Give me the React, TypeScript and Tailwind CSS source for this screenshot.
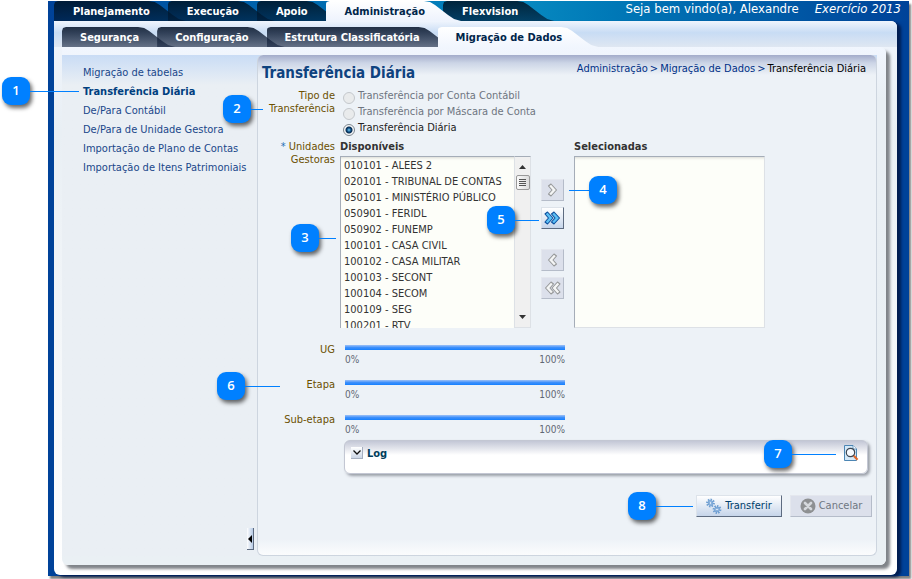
import React, { useState } from "react";

type TabItem = { label: string; active?: boolean; z: string };

const mainTabs: TabItem[] = [
  { label: "Planejamento", z: "z-0" },
  { label: "Execução", z: "z-0" },
  { label: "Apoio", z: "z-0" },
  { label: "Administração", active: true, z: "z-10" },
  { label: "Flexvision", z: "z-0" },
];

const subTabs: TabItem[] = [
  { label: "Segurança", z: "z-0" },
  { label: "Configuração", z: "z-0" },
  { label: "Estrutura Classificatória", z: "z-0" },
  { label: "Migração de Dados", active: true, z: "z-10" },
];

const menu = [
  "Migração de tabelas",
  "Transferência Diária",
  "De/Para Contábil",
  "De/Para de Unidade Gestora",
  "Importação de Plano de Contas",
  "Importação de Itens Patrimoniais",
];

const units = [
  "010101 - ALEES 2",
  "020101 - TRIBUNAL DE CONTAS",
  "050101 - MINISTÉRIO PÚBLICO",
  "050901 - FERIDL",
  "050902 - FUNEMP",
  "100101 - CASA CIVIL",
  "100102 - CASA MILITAR",
  "100103 - SECONT",
  "100104 - SECOM",
  "100109 - SEG",
  "100201 - RTV",
];

const tabClip =
  "[clip-path:polygon(0_4px,1px_1px,4px_0,calc(100%-37px)_0,calc(100%-31px)_1px,calc(100%-26px)_4px,calc(100%-13px)_14px,calc(100%-7px)_18px,100%_20px,0_20px)]";

function Tab({ tab, level }: { tab: TabItem; level: 1 | 2 }) {
  const look = tab.active
    ? level === 1
      ? "bg-linear-to-b from-white to-[#eef3fd] text-[#00254a]"
      : "bg-linear-to-b from-white to-[#f1f6fe] text-[#00254a]"
    : level === 1
      ? "bg-linear-to-b from-[#001425]/85 to-[#001a35]/65 text-white"
      : "bg-linear-to-b from-[#0c1a30]/90 to-[#15233f]/60 text-white";
  const pad = level === 1 ? "pl-[19px] pr-9" : "pl-[18px] pr-9";
  return (
    <button
      type="button"
      role="tab"
      aria-selected={!!tab.active}
      className={`relative -mr-[18px] h-5 whitespace-nowrap text-[11px] leading-[22px] font-bold ${pad} ${tab.z} ${look} ${tabClip}`}
    >
      {tab.label}
    </button>
  );
}

function Callout({ n, place, line, side = "right" }: { n: number; place: string; line: string; side?: "left" | "right" }) {
  return (
    <div className={`pointer-events-none absolute z-20 flex items-center ${side === "left" ? "flex-row-reverse" : ""} ${place}`}>
      <span className="flex size-7 items-center justify-center rounded-[9px] bg-[#0080ff] font-['Open_Sans',sans-serif] text-[13px] font-semibold text-white shadow-[2px_3px_4px_rgba(0,0,0,0.6)]">
        {n}
      </span>
      <span className={`h-px bg-[#0080ff] ${line}`} />
    </div>
  );
}

function Chevrons({ double, left, active }: { double?: boolean; left?: boolean; active?: boolean }) {
  const d = double
    ? ["M1 3 L3.500 1 L9 7 L3.500 13 L1 11 L4.500 7 Z", "M7.500 3 L10 1 L15.500 7 L10 13 L7.500 11 L11 7 Z"]
    : ["M4.500 3 L7 1 L12.500 7 L7 13 L4.500 11 L8 7 Z"];
  return (
    <svg viewBox="0 0 17 14" className={`h-3.5 w-[17px] ${left ? "-scale-x-100" : ""}`} aria-hidden="true">
      {d.map((p) => (
        <path key={p} d={p} fill={active ? "#5cc0f5" : "#f4f5f5"} stroke={active ? "#0c4f9e" : "#969899"} strokeWidth="1.1" strokeLinejoin="round" />
      ))}
    </svg>
  );
}

function MoveButton({ label, double, left, active }: { label: string; double?: boolean; left?: boolean; active?: boolean }) {
  const look = active
    ? "border-t-[#dde3ea] border-l-[#dde3ea] border-r-[#5d6b80] border-b-[#5d6b80] bg-linear-to-b from-white to-[#c6d5ea]"
    : "border-t-[#e4e7ee] border-l-[#e4e7ee] border-r-[#b5bcc9] border-b-[#b5bcc9] bg-[#dce0eb]";
  return (
    <button type="button" aria-label={label} disabled={!active} className={`flex h-[22px] w-[23px] items-center justify-center border ${look}`}>
      <Chevrons double={double} left={left} active={active} />
    </button>
  );
}

function Gear({ cx, cy, r }: { cx: number; cy: number; r: number }) {
  return (
    <g>
      <circle cx={cx} cy={cy} r={r} fill="none" stroke="#6f9fd2" strokeWidth="2" strokeDasharray="1.5 1.1" />
      <circle cx={cx} cy={cy} r={r - 1} fill="#a9cbee" stroke="#5b8fc9" strokeWidth="0.8" />
      <circle cx={cx} cy={cy} r="1.2" fill="#f2f7fc" stroke="#5b8fc9" strokeWidth="0.6" />
    </g>
  );
}

function Progress({ label }: { label: string }) {
  return (
    <div className="flex h-[35px]">
      <span id={`p-${label}`} className="w-[77px] text-right leading-[15px] text-[#6b5000]">
        {label}
      </span>
      <div className="ml-[10px] w-[220px] pt-[3px]">
        <div role="progressbar" aria-labelledby={`p-${label}`} className="h-[5px] bg-linear-to-b from-[#9cc0f5] via-[#3d90fb] to-[#0f80ff]" />
        <div className="mt-1 flex justify-between text-[10px] leading-3 text-[#5f6874]">
          <span>0%</span>
          <span>100%</span>
        </div>
      </div>
    </div>
  );
}

const listBox =
  "block h-[172px] appearance-none overflow-hidden border-t border-l border-[#a5adb8] bg-[#fdfef9] pt-0.5 shadow-[inset_0_3px_3px_-2px_rgba(0,0,0,0.15)] outline-none";

export default function App() {
  const [type, setType] = useState(2);
  const radios = ["Transferência por Conta Contábil", "Transferência por Máscara de Conta", "Transferência Diária"];

  return (
    <div className="relative flex min-h-screen flex-col bg-white pt-px pr-[3px] pb-[3px] pl-12 font-['DejaVu_Sans_Condensed','DejaVu_Sans',sans-serif] text-[11px] text-[#333]">
      <div className="flex grow flex-col bg-[#004299] shadow-[2px_3px_2px_rgba(0,0,0,0.5)]">
        <header className="flex h-5 justify-between bg-linear-to-r from-[#004299] via-[#0889c0] via-55% to-[#004299] pl-1.5">
          <nav role="tablist" aria-label="Módulos" className="flex">
            {mainTabs.map((t) => (
              <Tab key={t.label} tab={t} level={1} />
            ))}
          </nav>
          <div className="flex gap-4 pr-2 text-[13px] leading-4 whitespace-nowrap text-white">
            <span>Seja bem vindo(a), Alexandre</span>
            <em>Exercício 2013</em>
          </div>
        </header>

        <div className="mr-3 mb-px ml-1.5 flex grow flex-col rounded-tr-md rounded-b-md bg-linear-to-b from-[#f0f5fd] via-[#e9eff4] via-20% to-white pr-[11px] pb-2.5 pl-2 shadow-[4px_2px_3px_#001c50]">
          <nav role="tablist" aria-label="Seções" className="-mr-[11px] -ml-2 flex h-[26px] rounded-tr-md bg-linear-to-b from-[#f0f5fd] via-[#c8dcf4] via-45% to-[#dfe7f2] pt-1.5 pl-2">
            {subTabs.map((t) => (
              <Tab key={t.label} tab={t} level={2} />
            ))}
          </nav>

          <div className="flex grow flex-col rounded-tr-md rounded-b-md bg-linear-to-b from-[#f1f6fe] via-[#e9eff4] via-10% to-[#eaf0f4] pt-2 pr-[9px] pb-[9px] shadow-[4px_4px_3px_#808489]">
            <div className="flex grow bg-linear-to-b from-[#c9dcf5] to-[#eaeff4] to-[30px]">
              <aside className="relative flex w-[195px] shrink-0 flex-col">
                <nav aria-label="Migração de Dados" className="pt-2 pl-[21px]">
                  <ul>
                    {menu.map((m, i) => (
                      <li key={m} className="h-[19px] leading-[19px] whitespace-nowrap">
                        <a href="#" className={i === 1 ? "font-bold text-[#004080]" : "text-[#1a478a]"}>
                          {m}
                        </a>
                      </li>
                    ))}
                  </ul>
                </nav>
                <button
                  type="button"
                  aria-label="Recolher menu"
                  className="mt-auto mr-[3px] mb-[6px] flex h-[22px] w-[7px] items-center justify-center self-end border-r border-b border-[#5d6b80] bg-linear-to-r from-white to-[#b5c9e4]"
                >
                  <svg viewBox="0 0 4 8" className="h-2 w-1" aria-hidden="true">
                    <path d="M4 0 L0 4 L4 8 Z" fill="#000" />
                  </svg>
                </button>
              </aside>

              <main className="flex min-w-0 grow flex-col rounded-md border border-t-0 border-[#cdd5df] bg-[#edf2f7] bg-[linear-gradient(to_bottom,#a3acca_0,#ccd5e6_8px,#edf2f7_20px,#edf2f7_calc(100%-16px),#fbfcfd_100%)] pr-2 pb-9">
                <div className="flex justify-between pl-1">
                  <h1 className="pt-2 text-[15px] leading-5 font-bold text-[#0f437f]">Transferência Diária</h1>
                  <nav aria-label="Trilha" className="flex gap-0.5 pt-[7px] pr-0.5 leading-[14px] text-[#003087]">
                    <a href="#">Administração</a>
                    <span>&gt;</span>
                    <a href="#">Migração de Dados</a>
                    <span>&gt;</span>
                    <span className="text-black">Transferência Diária</span>
                  </nav>
                </div>

                <fieldset className="mt-[6px] flex">
                  <legend className="float-left w-[77px] text-right leading-[13px] text-[#6b5000]">
                    Tipo de
                    <br />
                    Transferência
                  </legend>
                  <div className="ml-2">
                    {radios.map((r, i) => (
                      <label key={r} className={`flex h-4 gap-[3px] leading-[13px] ${i < 2 ? "text-[#6d7580]" : "text-[#222]"}`}>
                        <input
                          type="radio"
                          name="tipo"
                          disabled={i < 2}
                          checked={type === i}
                          onChange={() => setType(i)}
                          className="mt-[3px] size-3 appearance-none rounded-full border border-[#c4c8cc] bg-[#e9ebec] checked:border-[#7d868f] checked:bg-[radial-gradient(circle,#7fd0f5_0,#0a4a80_2px,#0a2c50_3px,#f5f7f8_4px)]"
                        />
                        {r}
                      </label>
                    ))}
                  </div>
                </fieldset>

                <div className="mt-[3px] flex">
                  <label htmlFor="disp" className="w-[77px] text-right leading-[13px] text-[#6b5000]">
                    <span className="text-[#2a6fb5]">*</span> Unidades
                    <br />
                    Gestoras
                  </label>
                  <div className="ml-[5px]">
                    <h2 className="h-4 leading-[13px] font-bold">Disponíveis</h2>
                    <div className="flex">
                      <select id="disp" multiple size={10} className={`w-[174px] text-[11px] ${listBox}`}>
                        {units.map((u) => (
                          <option key={u} className="h-4 min-h-4 px-[3px] py-0 leading-4 text-[#333]">
                            {u}
                          </option>
                        ))}
                      </select>
                      <div aria-hidden="true" className="flex w-[17px] flex-col items-center border border-[#dde1e6] border-t-[#a5adb8] bg-[#f0f0f0] py-2">
                        <svg viewBox="0 0 7 4" className="h-1 w-[7px]">
                          <path d="M0 4 L3.500 0 L7 4 Z" fill="#333" />
                        </svg>
                        <span className="mt-[6px] flex h-[15px] w-3.5 flex-col items-center justify-center gap-px rounded-xs border border-[#999] bg-linear-to-r from-[#fafafa] to-[#dcdcdc]">
                          <i className="h-px w-[7px] bg-[#555]" />
                          <i className="h-px w-[7px] bg-[#555]" />
                          <i className="h-px w-[7px] bg-[#555]" />
                          <i className="h-px w-[7px] bg-[#555]" />
                        </span>
                        <svg viewBox="0 0 7 4" className="mt-auto h-1 w-[7px]">
                          <path d="M0 0 L3.500 4 L7 0 Z" fill="#333" />
                        </svg>
                      </div>
                    </div>
                  </div>
                  <div className="ml-[10px] flex flex-col gap-1.5 pt-[39px]">
                    <MoveButton label="Adicionar" />
                    <MoveButton label="Adicionar todas" double active />
                    <div className="h-2" />
                    <MoveButton label="Remover" left />
                    <MoveButton label="Remover todas" left double />
                  </div>
                  <div className="ml-[10px]">
                    <label htmlFor="sel" className="block h-4 leading-[13px] font-bold">
                      Selecionadas
                    </label>
                    <select id="sel" multiple size={10} className={`w-[191px] border-r border-b border-r-[#dde1e6] border-b-[#dde1e6] ${listBox}`} />
                  </div>
                </div>

                <div className="mt-[14px]">
                  <Progress label="UG" />
                  <Progress label="Etapa" />
                  <Progress label="Sub-etapa" />
                </div>

                <section className="mt-[-7px] ml-[86px] flex h-[34px] justify-between rounded-md border border-[#c3c7d3] bg-linear-to-b from-[#c3c7d6] to-white to-[14px] pt-1 pr-2 pl-1.5 shadow-[2px_2px_3px_#9a9fa8]">
                  <div className="flex gap-1">
                    <button type="button" aria-label="Expandir log" className="mt-0.5 flex size-3 items-center justify-center border-r border-b border-[#a6afc0] bg-linear-to-b from-white to-[#ccd6e6]">
                      <svg viewBox="0 0 8 5" className="h-[5px] w-2" aria-hidden="true">
                        <path d="M0.500 0.500 L4 4 L7.500 0.500" fill="none" stroke="#111" strokeWidth="1.3" />
                      </svg>
                    </button>
                    <h2 className="leading-[17px] font-bold text-[#003d5b]">Log</h2>
                  </div>
                  <button type="button" aria-label="Visualizar log" className="size-4">
                    <svg viewBox="0 0 16 16" className="size-4" aria-hidden="true">
                      <path d="M1.500 0.500 H10 L13.500 4 V15.500 H1.500 Z" fill="#d3e8f8" stroke="#4c86b4" />
                      <path d="M10 0.500 V4 H13.500" fill="#fff" stroke="#4c86b4" strokeWidth="0.800" />
                      <circle cx="7.500" cy="7.500" r="4.200" fill="#f7fbff" stroke="#3c4652" strokeWidth="1.200" />
                      <path d="M10.800 10.800 L14.500 14.800" stroke="#e0692c" strokeWidth="2.200" />
                    </svg>
                  </button>
                </section>

                <div className="mt-[21px] -mr-1 flex justify-end gap-2">
                  <button type="button" className="flex h-[22px] w-[86px] items-center justify-center gap-[3px] border border-t-[#dde3ea] border-r-[#5d6b80] border-b-[#5d6b80] border-l-[#dde3ea] bg-linear-to-b from-white to-[#c6d5ea] text-[#003d6b]">
                    <svg viewBox="0 0 16 16" className="size-4" aria-hidden="true">
                      <Gear cx={4.5} cy={5} r={3.4} />
                      <Gear cx={11} cy={11.5} r={3.4} />
                    </svg>
                    Transferir
                  </button>
                  <button type="button" disabled className="flex h-[22px] w-[82px] items-center justify-center gap-[3px] border border-t-[#e4e7ee] border-r-[#b5bcc9] border-b-[#b5bcc9] border-l-[#e4e7ee] bg-[#dce0eb] text-[#6f7782]">
                    <svg viewBox="0 0 16 16" className="size-4" aria-hidden="true">
                      <circle cx="8" cy="8" r="7.500" fill="#8e9092" />
                      <path d="M5 5 L11 11 M11 5 L5 11" stroke="#d5d8dc" strokeWidth="2.600" strokeLinecap="round" />
                    </svg>
                    Cancelar
                  </button>
                </div>
              </main>
            </div>
          </div>
        </div>
      </div>

      <Callout n={1} place="left-0.5 top-[77px]" line="w-[49px]" />
      <Callout n={2} place="left-[223px] top-[95px]" line="w-[12px]" />
      <Callout n={3} place="left-[291px] top-[224px]" line="w-[17px]" />
      <Callout n={4} place="left-[569px] top-[176px]" line="w-5" side="left" />
      <Callout n={5} place="left-[487px] top-[206px]" line="w-6" />
      <Callout n={6} place="left-[217px] top-[372px]" line="w-[35px]" />
      <Callout n={7} place="right-[76px] top-[440px]" line="w-11" />
      <Callout n={8} place="right-[219px] top-[492px]" line="w-[37px]" />
    </div>
  );
}
